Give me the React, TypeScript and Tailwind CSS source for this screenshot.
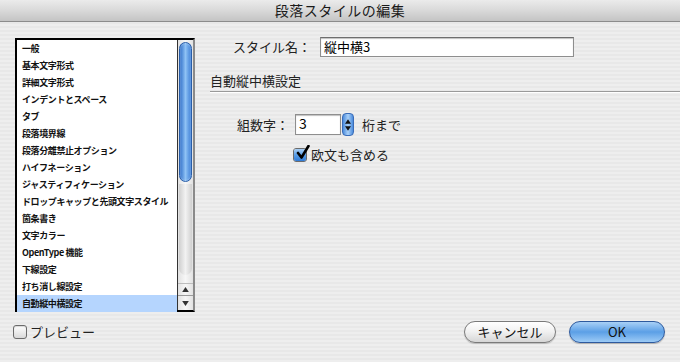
import React from 'react'

const items = [
  '一般',
  '基本文字形式',
  '詳細文字形式',
  'インデントとスペース',
  'タブ',
  '段落境界線',
  '段落分離禁止オプション',
  'ハイフネーション',
  'ジャスティフィケーション',
  'ドロップキャップと先頭文字スタイル',
  '箇条書き',
  '文字カラー',
  'OpenType 機能',
  '下線設定',
  '打ち消し線設定',
  '自動縦中横設定',
]

const Checkbox = ({ checked }: { checked?: boolean }) => (
  <div className="relative w-[14px] h-[14px] rounded-[3px] border border-[#6b6b6b] bg-gradient-to-b from-[#ffffff] to-[#d9d9d9] shadow-[inset_0_1px_1px_rgba(0,0,0,0.15)]">
    {checked && (
      <>
        <div className="absolute inset-0 rounded-[2px] bg-gradient-to-b from-[#a9cff4] via-[#5a9ee6] to-[#2f7ad6]" />
        <svg viewBox="0 0 16 16" className="absolute left-[1px] -top-[4px] w-[16px] h-[16px]">
          <path d="M3 8 L6.5 12.5 L13.5 1" fill="none" stroke="#000" strokeWidth="2.6" strokeLinecap="round" strokeLinejoin="round" />
        </svg>
      </>
    )}
  </div>
)

const App = () => {
  return (
    <div className="w-[680px] h-[362px] flex flex-col font-['Noto_Sans_CJK_JP','Noto_Sans',sans-serif] text-black bg-[repeating-linear-gradient(0deg,#eeeeee_0px,#eeeeee_2px,#e8e8e8_2px,#e8e8e8_4px)] overflow-hidden">
      {/* title bar */}
      <div className="h-[22px] shrink-0 flex items-center justify-center border-b border-[#8c8c8c] bg-gradient-to-b from-[#ebebeb] via-[#d9d9d9] to-[#c4c4c4] text-[14px] text-[#1a1a1a] tracking-[0.5px]">
        段落スタイルの編集
      </div>

      <div className="flex">
        {/* list */}
        <div className="pl-[15px] pt-[16px]">
          <div className="flex w-[180px] h-[274px] border-2 border-black border-r-[#8a8a8a] bg-white">
            <div className="w-[160px] flex flex-col">
              {items.map((it, i) => (
                <div
                  key={it}
                  className={`h-[17px] shrink-0 flex items-center pl-[5px] whitespace-nowrap text-[9px] font-semibold tracking-[-0.4px] text-[#111] ${
                    i === items.length - 1 ? 'bg-[#b5d5fe]' : ''
                  }`}
                >
                  {it}
                </div>
              ))}
            </div>
            {/* scrollbar */}
            <div className="w-[16px] flex flex-col border-l border-[#333] bg-gradient-to-r from-[#e2e2e2] via-[#f7f7f7] to-[#e2e2e2]">
              <div className="flex-1 px-[1px] pt-[2px] pb-[2px] flex flex-col">
                <div className="h-[140px] rounded-full border border-[#2a5ea8] bg-gradient-to-r from-[#2f6fc8] via-[#8fc2f5] to-[#3d7fd6] shadow-[inset_0_0_2px_rgba(255,255,255,0.6)]" />
                <div className="flex-1 mt-[2px] mb-[6px] rounded-b-full bg-gradient-to-r from-[#d0d0d0] via-[#f2f2f2] to-[#d0d0d0]" />
              </div>
              <div className="h-[12px] flex items-center justify-center border-t border-[#bdbdbd]">
                <svg viewBox="0 0 8 6" className="w-[7px] h-[5px]"><path d="M4 0 L8 6 L0 6 Z" fill="#333" /></svg>
              </div>
              <div className="h-[15px] flex items-center justify-center border-t border-[#9c9c9c]">
                <svg viewBox="0 0 8 6" className="w-[7px] h-[5px]"><path d="M0 0 L8 0 L4 6 Z" fill="#333" /></svg>
              </div>
            </div>
          </div>
        </div>

        {/* right panel */}
        <div className="flex-1 pl-[15px] pt-[15px] flex flex-col">
          <div className="flex items-center">
            <div className="w-[101px] text-right text-[13px] text-[#222]">スタイル名：</div>
            <div className="ml-[9px] w-[254px] h-[20px] border border-[#8e8e8e] border-t-[#6e6e6e] bg-white shadow-[inset_0_1px_1px_rgba(0,0,0,0.25)] flex items-center pl-[3px] text-[13px]">
              縦中横3
            </div>
          </div>

          <div className="mt-[16px] text-[13px] text-[#222] leading-[16px]">自動縦中横設定</div>
          <div className="mt-[2px] h-[2px] border-t border-[#9a9a9a] border-b border-b-white" />

          <div className="mt-[20px] flex items-center">
            <div className="w-[79px] text-right text-[13px] text-[#222]">組数字：</div>
            <div className="ml-[6px] w-[46px] h-[21px] border border-[#8e8e8e] bg-white shadow-[inset_0_1px_1px_rgba(0,0,0,0.25)] flex items-start pl-[3px] text-[14px] leading-[17px]">
              3
            </div>
            <div className="ml-[1px] w-[12px] h-[23px] rounded-[4px] border border-[#3a6cb8] bg-gradient-to-r from-[#4a8bdc] via-[#a9d0f7] to-[#4a8bdc] flex flex-col items-center justify-center gap-[2px]">
              <svg viewBox="0 0 8 6" className="w-[6px] h-[5px]"><path d="M4 0 L8 6 L0 6 Z" fill="#111" /></svg>
              <svg viewBox="0 0 8 6" className="w-[6px] h-[5px]"><path d="M0 0 L8 0 L4 6 Z" fill="#111" /></svg>
            </div>
            <div className="ml-[8px] text-[13px] text-[#222]">桁まで</div>
          </div>

          <div className="mt-[9px] ml-[83px] flex items-center gap-[4px]">
            <Checkbox checked />
            <span className="text-[13px] text-[#222]">欧文も含める</span>
          </div>
        </div>
      </div>

      {/* bottom row */}
      <div className="mt-[9px] flex items-center pl-[13px] pr-[15px]">
        <div className="flex items-center gap-[3px]">
          <Checkbox />
          <span className="text-[13px] text-[#222]">プレビュー</span>
        </div>
        <div className="flex-1" />
        <div className="w-[92px] h-[22px] rounded-full border border-[#7a7a7a] bg-gradient-to-b from-[#ffffff] via-[#f0f0f0] to-[#d6d6d6] shadow-[0_1px_1px_rgba(0,0,0,0.2)] flex items-center justify-center text-[13px] text-[#111]">
          キャンセル
        </div>
        <div className="ml-[13px] w-[96px] h-[22px] rounded-full border border-[#2e5a9e] bg-gradient-to-b from-[#a8d0f6] via-[#5b9fe6] to-[#9ccbf6] shadow-[0_1px_1px_rgba(0,0,0,0.25)] flex items-center justify-center text-[13px] text-[#111]">
          OK
        </div>
      </div>
    </div>
  )
}

export default App
